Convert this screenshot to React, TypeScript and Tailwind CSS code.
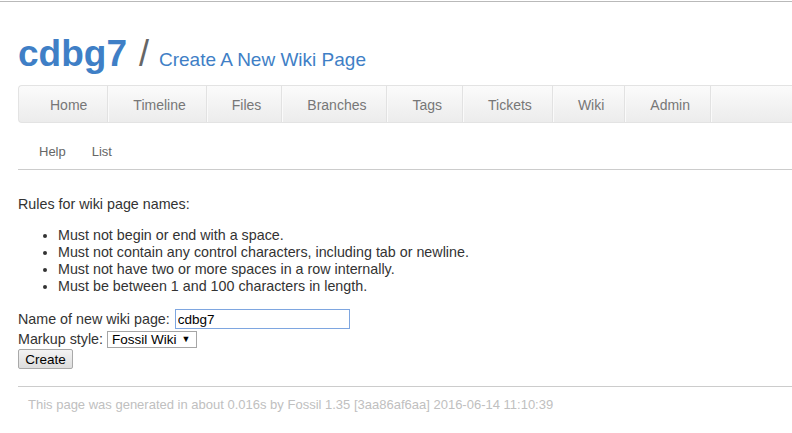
// Fossil "Create A New Wiki Page" screen

const NAV = ["Home", "Timeline", "Files", "Branches", "Tags", "Tickets", "Wiki", "Admin"]

const RULES = [
  "Must not begin or end with a space.",
  "Must not contain any control characters, including tab or newline.",
  "Must not have two or more spaces in a row internally.",
  "Must be between 1 and 100 characters in length.",
]

export default function App() {
  return (
    <div className="min-h-[433px] w-[792px] overflow-hidden bg-white font-['Liberation_Sans',Arial,sans-serif] text-[#333]">
      {/* thin top edge */}
      <div className="mt-[1px] h-px bg-[#b9b9b9]" />

      <div className="pl-[18px]">
        {/* title */}
        <div className="mt-[33px] flex items-baseline">
          <span className="text-[37px] font-bold leading-[37px] text-[#3f7fc6]">cdbg7</span>
          <span className="ml-[12px] text-[36px] leading-[37px] text-[#666]">/</span>
          <span className="ml-[10px] text-[19px] leading-[20px] text-[#3f7fc6]">Create A New Wiki Page</span>
        </div>

        {/* main menu */}
        <div className="mt-[13px] flex h-[38px] rounded-l-[4px] border border-r-0 border-[#e3e3e3] bg-gradient-to-b from-[#fbfbfb] to-[#ececec] pl-[6px]">
          {NAV.map((item) => (
            <div
              key={item}
              className="flex items-center border-r border-[#e2e2e2] pl-[25px] pr-[20px] pt-[2px] text-[14px] text-[#777] shadow-[1px_0_0_#fafafa]"
            >
              {item}
            </div>
          ))}
        </div>

        {/* sub menu */}
        <div className="mt-[21px] flex gap-[26px] pl-[21px] text-[13px] leading-[16px] text-[#666]">
          <span>Help</span>
          <span>List</span>
        </div>
        <div className="mt-[9px] border-t border-[#cccccc]" />

        {/* content */}
        <div className="text-[14.3px] leading-[17px]">
          <p className="mt-[26px]">Rules for wiki page names:</p>
          <ul className="mt-[14px] list-disc pl-[40px]">
            {RULES.map((r) => (
              <li key={r}>{r}</li>
            ))}
          </ul>

          <div className="mt-[14px]">
            <div className="flex h-[20px] items-center">
              <span>Name of new wiki page:</span>
              <input
                readOnly
                value="cdbg7"
                className="ml-[5px] h-[20px] w-[175px] border border-[#7ea6e0] px-[2px] text-[13.5px] text-black outline-none"
              />
            </div>
            <div className="flex h-[20px] items-center">
              <span>Markup style:</span>
              <div className="ml-[4px] flex h-[17px] w-[90px] items-center border border-[#a6a6a6] pl-[4px] text-[13.5px] text-black">
                Fossil Wiki
                <span className="ml-[5px] text-[9px]">▼</span>
              </div>
            </div>
            <div className="flex h-[20px] items-center">
              <div className="flex h-[20px] w-[55px] items-center justify-center rounded-[2px] border border-[#a9a9a9] bg-gradient-to-b from-[#f3f3f3] to-[#dddddd] text-[13.5px] text-black">
                Create
              </div>
            </div>
          </div>
        </div>

        {/* footer */}
        <div className="mt-[17px] border-t border-[#cccccc]" />
        <p className="mt-[10px] pl-[10px] text-[13px] leading-[16px] text-[#c0c0c0]">
          This page was generated in about 0.016s by Fossil 1.35 [3aa86af6aa] 2016-06-14 11:10:39
        </p>
      </div>
    </div>
  )
}
